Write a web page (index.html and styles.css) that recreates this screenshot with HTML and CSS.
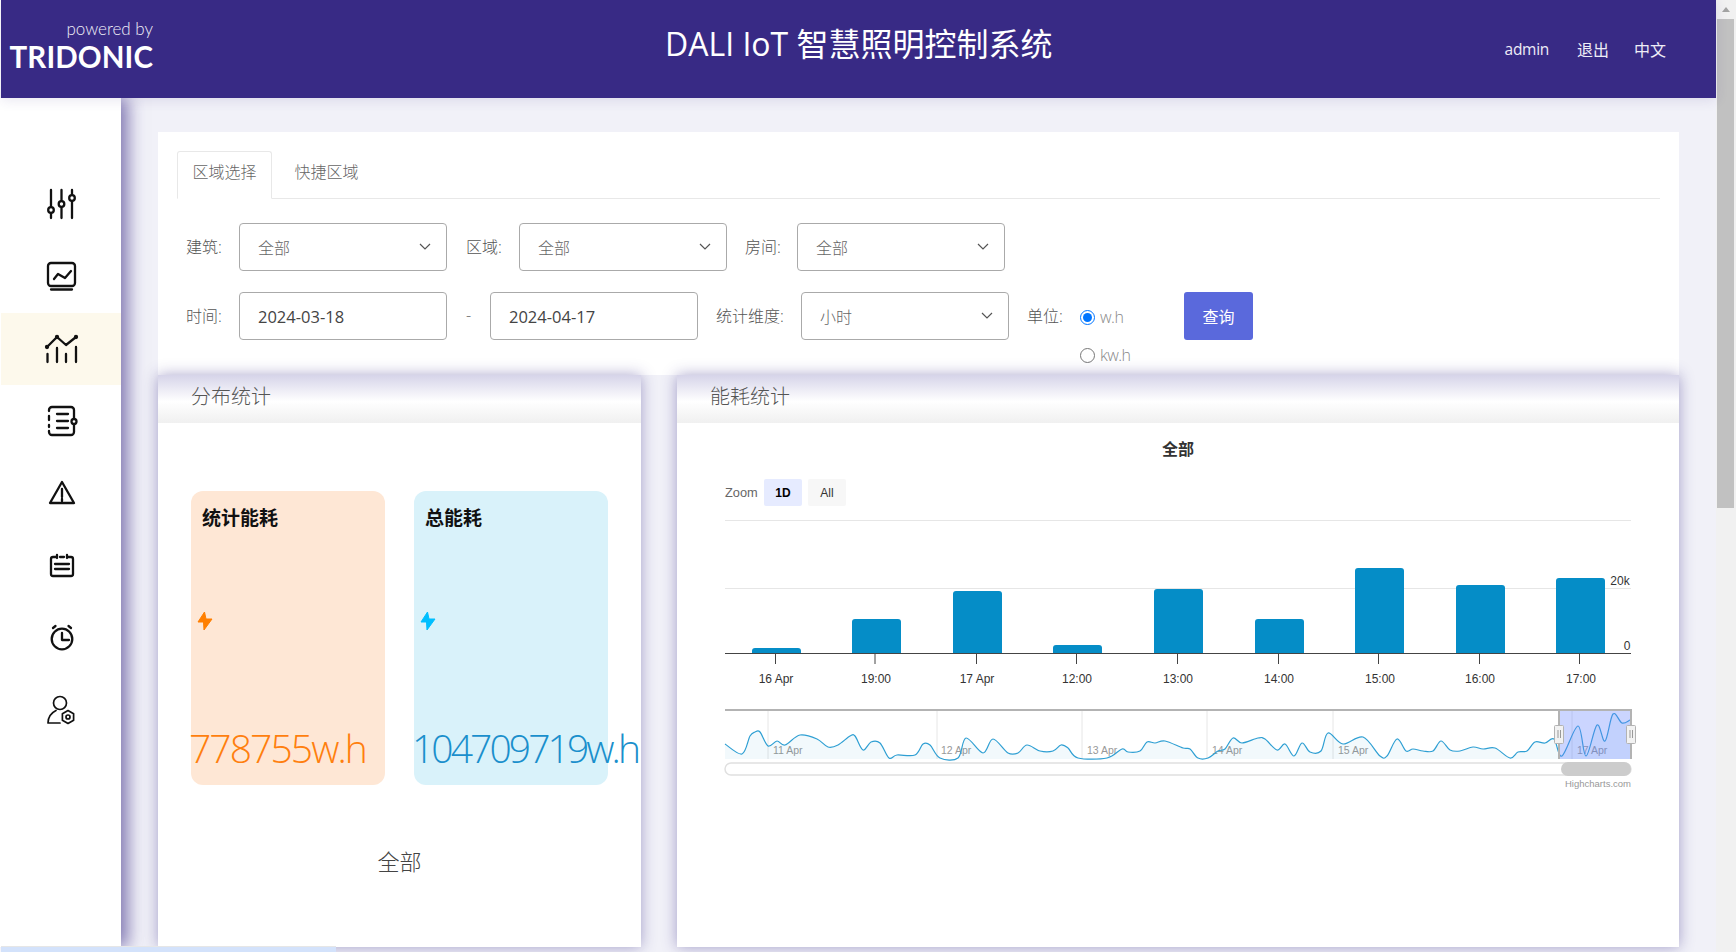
FILE: index.html
```html
<!DOCTYPE html>
<html lang="zh-CN">
<head>
    <meta charset="UTF-8">
    <meta name="viewport" content="width=device-width, initial-scale=1.0">
    <title>DALI IoT 智慧照明控制系统</title>
    <link rel="stylesheet" href="styles.css">
</head>
<body>
<div class="page">
    <div class="app">
        <!-- Header -->
        <header class="topbar">
            <div class="logo">
                <span class="logo-small">powered by</span>
                <span class="logo-name">TRIDONIC</span>
            </div>
            <h1 class="title">DALI IoT 智慧照明控制系统</h1>
            <nav class="user-nav">
                <span class="nav-admin">admin</span>
                <span class="nav-logout">退出</span>
                <span class="nav-lang">中文</span>
            </nav>
        </header>

        <div class="content">
            <!-- Sidebar -->
            <aside class="sidebar">
                <a class="side-item">
                    <svg class="side-icon" viewBox="0 0 40 40"><path d="M10 5v28M20.500 5v28M31 5v28"/><circle class="knob" cx="10" cy="25" r="2.800"/><circle class="knob" cx="20.500" cy="19" r="2.800"/><circle class="knob" cx="31" cy="13" r="2.800"/></svg>
                </a>
                <a class="side-item">
                    <svg class="side-icon" viewBox="0 0 40 40"><rect x="7" y="6" width="27" height="23" rx="3"/><path d="M13 22l4-5 7 4 6-7M10 32.500h21"/></svg>
                </a>
                <a class="side-item active">
                    <svg class="side-icon" viewBox="0 0 40 40"><path d="M6 18l10-10 9 8 10-8M6.500 25v8M16 19v14M25 25v8M35 18v15"/><circle class="dot" cx="6" cy="18" r="1"/><circle class="dot" cx="16" cy="8" r="1"/><circle class="dot" cx="35" cy="8" r="1"/></svg>
                </a>
                <a class="side-item">
                    <svg class="side-icon" viewBox="0 0 40 40"><path d="M8 10V9a3 3 0 0 1 3-3h19a3 3 0 0 1 3 3v8M33 24v7a3 3 0 0 1-3 3H11a3 3 0 0 1-3-3v-1M8 15v4M8 24v2M16 13h11M16 20h11M16 27h11"/><circle cx="33" cy="20.500" r="2.500"/></svg>
                </a>
                <a class="side-item">
                    <svg class="side-icon" viewBox="0 0 40 40"><path d="M21 9l12 21H9zM21 16v8M21 26v2"/></svg>
                </a>
                <a class="side-item">
                    <svg class="side-icon" viewBox="0 0 40 40"><path d="M15 12h-3a2 2 0 0 0-2 2v15a2 2 0 0 0 2 2h18a2 2 0 0 0 2-2V14a2 2 0 0 0-2-2h-3M19 12h4M16 10v3M26 10v3M14 19h14M14 24h14"/></svg>
                </a>
                <a class="side-item">
                    <svg class="side-icon" viewBox="0 0 40 40"><circle cx="21" cy="22" r="10.300"/><path d="M21 16v7h7M12 11l2.500-2M30 11l-2.500-2"/></svg>
                </a>
                <a class="side-item">
                    <svg class="side-icon thin" viewBox="0 0 40 40"><circle cx="19" cy="14" r="6.500"/><path d="M7 34c0-6 3-10 8-12.500M7 34h12"/><circle cx="27" cy="28" r="2"/><path d="M27 21.500l5.600 3.250v6.500L27 34.500l-5.600-3.250v-6.500z"/></svg>
                </a>
            </aside>

            <main class="main">
                <!-- Filters -->
                <section class="filter-card">
                    <div class="tabs">
                        <span class="tab active">区域选择</span>
                        <span class="tab">快捷区域</span>
                    </div>
                    <div class="form-row row-top">
                        <label class="field-label">建筑:</label>
                        <div class="select"><span>全部</span><svg class="chevron" viewBox="0 0 12 8"><path d="M1 1l5 5 5-5"/></svg></div>
                        <label class="field-label next">区域:</label>
                        <div class="select"><span>全部</span><svg class="chevron" viewBox="0 0 12 8"><path d="M1 1l5 5 5-5"/></svg></div>
                        <label class="field-label room">房间:</label>
                        <div class="select"><span>全部</span><svg class="chevron" viewBox="0 0 12 8"><path d="M1 1l5 5 5-5"/></svg></div>
                    </div>
                    <div class="form-row row-bottom">
                        <label class="field-label">时间:</label>
                        <div class="select date">2024-03-18</div>
                        <span class="dash">-</span>
                        <div class="select date">2024-04-17</div>
                        <label class="field-label dimension">统计维度:</label>
                        <div class="select"><span>小时</span><svg class="chevron" viewBox="0 0 12 8"><path d="M1 1l5 5 5-5"/></svg></div>
                        <label class="field-label unit">单位:</label>
                        <div class="radios">
                            <label class="radio"><input type="radio" name="unit" checked>w.h</label>
                            <label class="radio"><input type="radio" name="unit">kw.h</label>
                        </div>
                        <button class="query-btn">查询</button>
                    </div>
                </section>

                <div class="panels">
                    <!-- Distribution -->
                    <section class="panel panel-left">
                        <div class="panel-head">分布统计</div>
                        <div class="stat-cards">
                            <div class="stat-card orange">
                                <div class="stat-name">统计能耗</div>
                                <svg class="bolt" viewBox="0 0 16 20"><path d="M7.500 1L1 11h5.500L7 19l8-11H9z"/></svg>
                                <div class="stat-value">778755w.h</div>
                            </div>
                            <div class="stat-card blue">
                                <div class="stat-name">总能耗</div>
                                <svg class="bolt" viewBox="0 0 16 20"><path d="M7.500 1L1 11h5.500L7 19l8-11H9z"/></svg>
                                <div class="stat-value">104709719w.h</div>
                            </div>
                        </div>
                        <div class="stat-caption">全部</div>
                    </section>

                    <!-- Energy chart -->
                    <section class="panel panel-right">
                        <div class="panel-head">能耗统计</div>
                        <svg class="chart" viewBox="677 422 1002 524">
                            <text class="chart-title" x="1178" y="454" text-anchor="middle">全部</text>

                            <text class="zoom-label" x="725" y="496">Zoom</text>
                            <rect class="zoom-on" x="764" y="478" width="38" height="27" rx="2"/>
                            <text class="zoom-on-text" x="783" y="496" text-anchor="middle">1D</text>
                            <rect class="zoom-off" x="808" y="478" width="38" height="27" rx="2"/>
                            <text class="zoom-off-text" x="827" y="496" text-anchor="middle">All</text>
                            <path class="grid" d="M725 519.500h906M725 587.500h906"/>

                            <g class="bars">
                                <rect x="752" y="647" width="49" height="8" rx="3"/>
                                <rect x="852" y="618" width="49" height="37" rx="3"/>
                                <rect x="953" y="590" width="49" height="65" rx="3"/>
                                <rect x="1053" y="644" width="49" height="11" rx="3"/>
                                <rect x="1154" y="588" width="49" height="67" rx="3"/>
                                <rect x="1255" y="618" width="49" height="37" rx="3"/>
                                <rect x="1355" y="567" width="49" height="88" rx="3"/>
                                <rect x="1456" y="584" width="49" height="71" rx="3"/>
                                <rect x="1556" y="577" width="49" height="78" rx="3"/>
                            </g>
                            <rect class="plot-cover" x="725" y="653" width="906" height="6"/>
                            <path class="axis" d="M725 652.500h906M775.500 652v11M875 652v11M976.500 652v11M1076.500 652v11M1177.500 652v11M1278.500 652v11M1378.500 652v11M1479.500 652v11M1579.500 652v11"/>
                            <g class="x-labels" text-anchor="middle">
                                <text x="776" y="682">16 Apr</text>
                                <text x="876" y="682">19:00</text>
                                <text x="977" y="682">17 Apr</text>
                                <text x="1077" y="682">12:00</text>
                                <text x="1178" y="682">13:00</text>
                                <text x="1279" y="682">14:00</text>
                                <text x="1380" y="682">15:00</text>
                                <text x="1480" y="682">16:00</text>
                                <text x="1581" y="682">17:00</text>
                                <text x="1620" y="584">20k</text>
                                <text x="1627" y="649">0</text>
                            </g>

                            <!-- Navigator -->
                            <path class="nav-grid" d="M768 709v49M937 709v49M1082 709v49M1207 709v49M1333 709v49M1572 709v49"/>
                            <g class="nav-labels">
                                <text x="773" y="753">11 Apr</text>
                                <text x="941" y="753">12 Apr</text>
                                <text x="1087" y="753">13 Apr</text>
                                <text x="1212" y="753">14 Apr</text>
                                <text x="1338" y="753">15 Apr</text>
                                <text x="1577" y="753">17 Apr</text>
                            </g>
                            <path id="nav-area" class="nav-area"/>
                            <path id="nav-line" class="nav-line"/>
                            <rect class="nav-mask" x="1559" y="709" width="72" height="49"/>
                            <path class="nav-outline" d="M725 709h834M1559 709h72v49M1559 709v49"/>
                            <rect class="nav-handle" x="1554.500" y="724.500" width="9" height="18" rx="1"/>
                            <path class="nav-grip" d="M1558 729v8M1560.500 729v8"/>
                            <rect class="nav-handle" x="1626.500" y="724.500" width="9" height="18" rx="1"/>
                            <path class="nav-grip" d="M1630 729v8M1632.500 729v8"/>
                            <rect class="scroll-track" x="725" y="762" width="906" height="12" rx="6"/>
                            <rect class="scroll-thumb" x="1561" y="761" width="70" height="14" rx="7"/>
                            <text class="credit" x="1631" y="786" text-anchor="end">Highcharts.com</text>
                        </svg>
                    </section>
                </div>
            </main>
        </div>
    </div>

    <!-- Scrollbar -->
    <div class="scrollbar">
        <div class="scroll-arrow"></div>
        <div class="scroll-bar-thumb"></div>
    </div>
    <div class="bottom-strip"></div>
</div>
<script src="chart.js"></script>
</body>
</html>
```

FILE: styles.css
```css
* {
    box-sizing: border-box;
}
html, body {
    margin: 0;
    height: 100%;
    overflow: hidden;
}
body {
    font-family: "Open Sans", "Noto Sans CJK SC", sans-serif;
    font-weight: 300;
    color: #555;
    background: #fff;
}
.page {
    position: relative;
    display: flex;
    height: 952px;
}
.app {
    flex: 1;
    min-width: 0;
    display: flex;
    flex-direction: column;
}

/* Header */
.topbar {
    height: 98px;
    margin-left: 1px;
    padding-right: 50px;
    display: flex;
    align-items: center;
    background-color: #382a85;
    color: #fff;
    position: relative;
    z-index: 3;
    box-shadow: 0 2px 12px rgba(56, 42, 133, 0.12);
}
.logo {
    width: 152px;
    flex: none;
    display: flex;
    flex-direction: column;
    align-items: flex-end;
    margin-top: -4px;
    font-family: Lato, sans-serif;
}
.logo-small {
    font-size: 17px;
    line-height: 20px;
    font-weight: 300;
    color: #f0eff8;
}
.logo-name {
    font-weight: 700;
    font-size: 29.500px;
    line-height: 36px;
    letter-spacing: 0.1px;
}
.title {
    margin: -10px 0 0 512px;
    font-size: 32px;
    font-weight: 400;
    line-height: 40px;
    white-space: nowrap;
    flex: 1;
}
.user-nav {
    display: flex;
    font-size: 16px;
    color: #eeedf7;
    font-weight: 400;
}
.nav-admin {
    margin-right: 28px;
    margin-top: 1px;
    font-size: 15.500px;
    letter-spacing: -0.3px;
}
.nav-logout {
    margin-right: 25px;
}

.content {
    flex: 1;
    min-height: 0;
    display: flex;
}

/* Sidebar */
.sidebar {
    width: 121px;
    padding: 71px 0 0 1px;
    background: #fff;
    box-shadow: 7px 0 16px rgba(56, 42, 133, 0.6);
    position: relative;
    z-index: 2;
    margin-bottom: 5px;
}
.side-item {
    display: flex;
    align-items: center;
    justify-content: center;
    height: 72px;
}
.side-item.active {
    background-color: #fdf9ec;
}
.side-icon {
    width: 40px;
    height: 40px;
    fill: none;
    stroke: #111;
    stroke-width: 2.300;
    stroke-linecap: round;
    stroke-linejoin: round;
}
.side-icon .knob {
    fill: #fff;
}
.side-icon .dot {
    fill: #111;
}
.side-icon.thin {
    stroke-width: 1.700;
}

/* Main */
.main {
    flex: 1;
    min-width: 0;
    padding: 34px 37px 5px 37px;
    display: flex;
    flex-direction: column;
    background-color: #f1f1f8;
    overflow: hidden;
}
.filter-card {
    height: 243px;
    flex: none;
    padding: 19px 19px 0;
    background-color: #fff;
}
.tabs {
    display: flex;
    height: 48px;
    border-bottom: 1px solid #e8e8e8;
}
.tab {
    width: 95px;
    height: 48px;
    line-height: 41px;
    text-align: center;
    font-size: 16px;
    color: #666;
    border: 1px solid transparent;
}
.tab.active {
    margin-right: 7px;
    border-color: #e8e8e8;
    border-bottom-color: #fff;
    border-radius: 3px 3px 0 0;
}
.form-row {
    display: flex;
    align-items: flex-start;
    padding-left: 9px;
}
.row-top {
    margin-top: 24px;
}
.row-bottom {
    margin-top: 20px;
}
.field-label {
    width: 53px;
    flex: none;
    line-height: 49px;
    font-size: 16px;
    color: #555;
}
.field-label.next {
    margin-left: 19px;
}
.field-label.room {
    width: 52px;
    margin-left: 18px;
}
.field-label.dimension {
    width: 85px;
    margin-left: 18px;
}
.field-label.unit {
    width: 52px;
    margin-left: 18px;
}
.select {
    width: 208px;
    height: 48px;
    flex: none;
    padding: 0 15px 0 18px;
    display: flex;
    align-items: center;
    justify-content: space-between;
    border: 1px solid #aaa;
    border-radius: 4px;
    font-size: 16px;
    color: #666;
    background-color: #fff;
}
.select.date {
    font-size: 16.500px;
    font-weight: 400;
    color: #444;
}
.chevron {
    width: 12px;
    height: 8px;
    fill: none;
    stroke: #555;
    stroke-width: 1.200;
}
.dash {
    width: 43px;
    text-align: center;
    line-height: 46px;
    color: #666;
}
.radios {
    width: 105px;
    display: flex;
    flex-direction: column;
    padding-top: 15px;
}
.radio {
    display: flex;
    align-items: center;
    height: 20px;
    font-size: 16px;
    line-height: 20px;
    color: #888;
    letter-spacing: -0.5px;
}
.radio input {
    width: 15px;
    height: 15px;
    margin: 0 5px 0 1px;
}
.radio:first-child {
    margin-bottom: 18px;
}
.query-btn {
    width: 69px;
    height: 48px;
    border: none;
    border-radius: 3px;
    background-color: #5a69dc;
    color: #fff;
    font-family: inherit;
    font-size: 16px;
}

/* Panels */
.panels {
    flex: 1;
    min-height: 0;
    display: flex;
    gap: 36px;
}
.panel {
    background-color: #fff;
    box-shadow: 0 0 14px rgba(56, 42, 133, 0.42);
    overflow: hidden;
    position: relative;
}
.panel-left {
    width: 483px;
    flex: none;
}
.panel-right {
    flex: 1;
    min-width: 0;
}
.panel-head {
    height: 48px;
    padding-left: 33px;
    line-height: 44px;
    font-size: 20px;
    color: #555;
    background: linear-gradient(#d6d4e9, #fff 55%, #f0f0f0);
}
.stat-cards {
    display: flex;
    gap: 29px;
    padding: 68px 0 0 33px;
}
.stat-card {
    width: 194px;
    height: 294px;
    flex: none;
    border-radius: 12px;
}
.stat-card.orange {
    background-color: #fee7d5;
    color: #ff7f0e;
}
.stat-card.blue {
    background-color: #d9f2fa;
    color: #1a8fcc;
}
.stat-name {
    padding: 13px 0 0 11px;
    font-size: 19px;
    line-height: 28px;
    font-weight: 700;
    color: #111;
}
.bolt {
    display: block;
    width: 16px;
    height: 20px;
    margin: 79px 0 0 6px;
    fill: #ff7f00;
    stroke: #ff7f00;
    stroke-linejoin: round;
}
.blue .bolt {
    fill: #00bfff;
    stroke: #00bfff;
}
.stat-value {
    margin: 91px 0 0 -2px;
    font-size: 39px;
    line-height: 52px;
    letter-spacing: -1.900px;
    white-space: nowrap;
}
.blue .stat-value {
    letter-spacing: -2.900px;
}
.stat-caption {
    margin-top: 61px;
    text-align: center;
    font-size: 22px;
    line-height: 30px;
    color: #444;
}

/* Chart */
.chart {
    display: block;
    width: 1002px;
    height: 524px;
}
.chart text {
    font-family: "Liberation Sans", "Noto Sans CJK SC", sans-serif;
    font-weight: 400;
}
.chart .chart-title {
    font-size: 16px;
    font-weight: 700;
    fill: #333;
}
.zoom-label {
    font-size: 12.800px;
    fill: #666;
}
.zoom-on {
    fill: #e6ebff;
}
.zoom-off {
    fill: #f7f7f7;
}
.chart .zoom-on-text {
    font-size: 12px;
    font-weight: 700;
    fill: #000;
}
.zoom-off-text {
    font-size: 12px;
    fill: #333;
}
.grid {
    stroke: #e6e6e6;
    fill: none;
}
.bars rect {
    fill: #058dc7;
}
.plot-cover {
    fill: #fff;
}
.axis {
    stroke: #444;
    fill: none;
}
.x-labels text {
    font-size: 12px;
    fill: #333;
}
.nav-grid {
    stroke: #e6e6e6;
    fill: none;
}
.nav-labels text {
    font-size: 10.500px;
    fill: #999;
}
.nav-area {
    fill: rgba(5, 141, 199, 0.05);
}
.nav-line {
    fill: none;
    stroke: #2e9fd3;
    stroke-width: 1.200;
}
.nav-mask {
    fill: rgba(102, 133, 255, 0.34);
}
.nav-outline {
    fill: none;
    stroke: #b3b3b3;
    stroke-width: 2;
}
.nav-handle {
    fill: #f2f2f2;
    stroke: #b3b3b3;
}
.nav-grip {
    stroke: #999;
    fill: none;
}
.scroll-track {
    fill: #fff;
    stroke: #e0e0e0;
    stroke-width: 1.500;
}
.scroll-thumb {
    fill: #ccc;
}
.credit {
    font-size: 9.500px;
    fill: #999;
}

/* Scrollbar */
.scrollbar {
    width: 20px;
    flex: none;
    background-color: #f1f1f1;
}
.scroll-arrow {
    width: 0;
    height: 0;
    margin: 7px auto 0;
    border-left: 4px solid transparent;
    border-right: 4px solid transparent;
    border-bottom: 5px solid #a3a3a3;
}
.scroll-bar-thumb {
    width: 17px;
    height: 489px;
    margin: 7px 0 0 1px;
    background-color: #c1c1c1;
}
.bottom-strip {
    position: absolute;
    left: 1px;
    bottom: 0;
    width: 335px;
    height: 6px;
    background-color: #d3e2fb;
    border-top: 1px solid #e6e6e6;
    z-index: 4;
}
```

FILE: chart.js
```js
// Navigator series, in chart coordinates
var points = [
    [725,743],[742,753],[750,735],[755,731],[760,731],[768,745],[777,740],[785,744],[800,734],[817,738],
    [828,746],[838,744],[850,735],[855,735],[863,749],[871,741],[880,742],[889,757],[897,754],[915,754],
    [923,743],[930,744],[940,757],[958,757],[966,737],[983,752],[993,738],[1008,752],[1018,752],[1027,744],
    [1040,750],[1053,750],[1061,744],[1068,747],[1078,757],[1107,757],[1122,748],[1128,751],[1140,750],[1147,741],
    [1155,742],[1165,740],[1183,747],[1190,748],[1198,757],[1208,757],[1218,750],[1225,748],[1233,737],[1242,742],
    [1258,737],[1265,738],[1277,749],[1285,743],[1294,755],[1302,742],[1310,751],[1321,750],[1328,732],[1343,743],
    [1363,736],[1380,755],[1387,755],[1397,738],[1406,750],[1413,748],[1423,750],[1433,750],[1441,740],[1450,749],
    [1460,750],[1473,746],[1483,748],[1495,747],[1510,757],[1518,751],[1527,750],[1535,741],[1545,742],[1554,738],
    [1562,755],[1578,725],[1586,755],[1597,724],[1605,740],[1613,713],[1622,722],[1630,719]
];

function smoothPath(pts) {
    var d = 'M' + pts[0][0] + ' ' + pts[0][1];
    for (var i = 0; i < pts.length - 1; i++) {
        var p0 = pts[Math.max(i - 1, 0)];
        var p1 = pts[i];
        var p2 = pts[i + 1];
        var p3 = pts[Math.min(i + 2, pts.length - 1)];
        var c1x = p1[0] + (p2[0] - p0[0]) / 6;
        var c1y = p1[1] + (p2[1] - p0[1]) / 6;
        var c2x = p2[0] - (p3[0] - p1[0]) / 6;
        var c2y = p2[1] - (p3[1] - p1[1]) / 6;
        d += 'C' + c1x + ' ' + c1y + ' ' + c2x + ' ' + c2y + ' ' + p2[0] + ' ' + p2[1];
    }
    return d;
}

var line = smoothPath(points);
document.getElementById('nav-line').setAttribute('d', line);
document.getElementById('nav-area').setAttribute('d', line + 'V758H725Z');
```
